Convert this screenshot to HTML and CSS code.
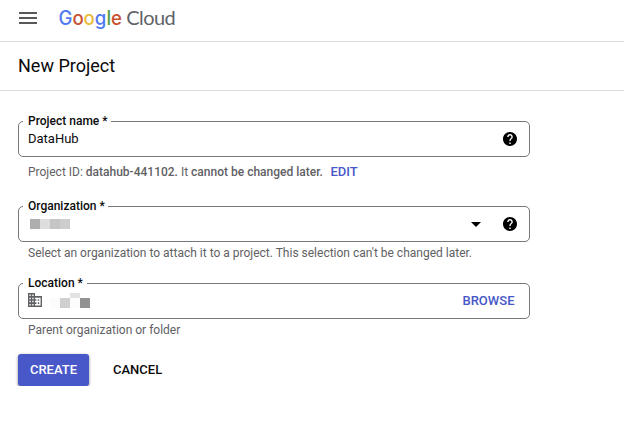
FILE: index.html
```html
<!DOCTYPE html>
<html lang="en">
<head>
<meta charset="utf-8">
<title>New Project</title>
<link rel="stylesheet" href="styles.css">
</head>
<body>
<header class="topbar">
  <svg class="menu" width="18" height="12" viewBox="0 0 18 12"><path d="M0 0h18v2H0zM0 5h18v2H0zM0 10h18v2H0z" fill="#57585a"/></svg>
  <svg class="logo" width="120" height="30" viewBox="0 0 120 30">
    <text x="-0.500" y="20.500" class="logo-text" textLength="63.500" lengthAdjust="spacingAndGlyphs"><tspan fill="#5079ef">G</tspan><tspan fill="#c9512f">o</tspan><tspan fill="#e9bb3a">o</tspan><tspan fill="#5079ef">g</tspan><tspan fill="#55a04c">l</tspan><tspan fill="#c9512f">e</tspan></text>
    <text x="67.200" y="20.500" class="logo-cloud" textLength="49.500" lengthAdjust="spacing">Cloud</text>
  </svg>
</header>
<div class="titlebar"><h1>New Project</h1></div>
<main class="form">
  <div class="field">
    <label class="label">Project name *</label>
    <span class="value">DataHub</span>
    <svg class="help" width="14" height="14" viewBox="2 2 20 20"><path d="M12 2C6.48 2 2 6.48 2 12s4.480 10 10 10 10-4.480 10-10S17.520 2 12 2zm1 17h-2v-2h2v2zm2.070-7.750l-.9.920C13.450 12.900 13 13.500 13 15h-2v-.5c0-1.100.450-2.100 1.170-2.830l1.240-1.260c.370-.360.590-.860.590-1.410 0-1.100-.9-2-2-2s-2 .9-2 2H8c0-2.210 1.790-4 4-4s4 1.790 4 4c0 .880-.360 1.680-.930 2.250z"/></svg>
  </div>
  <p class="hint hint-id"><span>Project ID: <b>datahub-441102.</b> It <b>cannot be changed later.</b></span><a class="link edit">EDIT</a></p>
  <div class="field">
    <label class="label label-org">Organization *</label>
    <span class="mosaic"><i class="m1"></i><i class="m2"></i><i class="m3"></i><i class="m4"></i></span>
    <svg class="caret" width="10" height="5" viewBox="0 0 10 5"><path d="M0 0h10L5 5z"/></svg>
    <svg class="help" width="14" height="14" viewBox="2 2 20 20"><path d="M12 2C6.48 2 2 6.48 2 12s4.480 10 10 10 10-4.480 10-10S17.520 2 12 2zm1 17h-2v-2h2v2zm2.070-7.750l-.9.920C13.450 12.900 13 13.500 13 15h-2v-.5c0-1.100.450-2.100 1.170-2.830l1.240-1.260c.370-.360.590-.860.590-1.410 0-1.100-.9-2-2-2s-2 .9-2 2H8c0-2.210 1.790-4 4-4s4 1.790 4 4c0 .880-.360 1.680-.930 2.250z"/></svg>
  </div>
  <p class="hint hint-org">Select an organization to attach it to a project. This selection can't be changed later.</p>
  <div class="field">
    <label class="label label-loc">Location *</label>
    <svg class="building" width="14" height="14" viewBox="2 3 20 18" preserveAspectRatio="none"><path fill="#5f6164" d="M12 7V3H2v18h20V7H12zM6 19H4v-2h2v2zm0-4H4v-2h2v2zm0-4H4V9h2v2zm0-4H4V5h2v2zm4 12H8v-2h2v2zm0-4H8v-2h2v2zm0-4H8V9h2v2zm0-4H8V5h2v2zm10 12h-8v-2h2v-2h-2v-2h2v-2h-2V9h8v10zm-2-8h-2v2h2v-2zm0 4h-2v2h2v-2z"/></svg>
    <svg class="redacted" width="40" height="15" viewBox="0 0 40 15"><path fill="#fcfcfc" d="M0 5h10v10H0z"/><path fill="#cfcfcf" d="M10 5h10v10H10z"/><path fill="#e2e2e2" d="M20 0h10v5H20z"/><path fill="#fcfcfc" d="M20 5h10v10H20z"/><path fill="#929292" d="M30 5h10v10H30z"/></svg>
    <a class="link browse">BROWSE</a>
  </div>
  <p class="hint hint-loc">Parent organization or folder</p>
  <div class="actions"><button class="create">CREATE</button><button class="cancel">CANCEL</button></div>
</main>
</body>
</html>
```
FILE: styles.css
```css
* { box-sizing: border-box; }
body { margin: 0; background: #fff; color: #0b0b0b; font-family: Roboto, sans-serif; font-size: 13px; }
.topbar { height: 42px; border-bottom: 1px solid #dcdcdc; display: flex; align-items: flex-start; padding-left: 19px; }
.menu { margin-top: 12px; }
.logo { margin: 4px 0 0 22px; overflow: visible; }
.logo-text { font: 500 19.5px Inter, sans-serif; }
.logo-cloud { font: 20px Lato, sans-serif; fill: #5f6368; }
.titlebar { height: 49px; border-bottom: 1px solid #dcdcdc; padding: 0 18px; display: flex; align-items: center; }
h1 { margin: 0; font-size: 18px; font-weight: 400; line-height: 24px; }
.form { padding: 30px 18px 0; width: 548px; }
.field { position: relative; height: 36px; border: 1px solid #77787b; border-radius: 5px; display: flex; align-items: center; padding: 0 12px 0 9px; }
.label { position: absolute; left: 4px; top: -8px; width: 88px; padding-left: 5px; background: #fff; font-size: 12px; font-weight: 500; line-height: 14px; white-space: nowrap; }
.label-org { width: 85px; }
.label-loc { width: 64px; }
.value { flex: 1; padding-bottom: 2px; }
.help { flex: none; }
.hint { margin: 0; padding-left: 10px; font-size: 12px; line-height: 16px; color: #5f6164; white-space: nowrap; }
.hint b { font-weight: 500; }
.hint-id { display: flex; margin: 7px 0 26px; }
.hint-org { margin: 3px 0 22px; }
.hint-loc { margin: 3px 0 16px; }
.link { color: #4757c9; font-weight: 500; font-size: 13px; }
.edit { margin-left: 7.5px; }
.browse { margin-left: auto; margin-right: 2.5px; padding-bottom: 2px; }
.building { margin-bottom: 2px; }
.mosaic { display: flex; margin-left: 2px; flex: 1; }
.mosaic i { width: 10px; height: 10px; }
.m1 { background: #aeaeae; }
.m2 { background: #dddddd; }
.m3 { background: #c5c5c5; }
.m4 { background: #cdcdcd; }
.caret { margin-right: 22px; }
.redacted { margin-left: 8px; margin-bottom: 1px; }
.actions { display: flex; }
button { font: 500 13px Roboto, sans-serif; height: 32px; border: 0; padding: 0 0 2px; }
.create { width: 71px; background: #4858c9; color: #fff; border-radius: 3px; box-shadow: 0 1px 3px rgba(0,0,0,.5); }
.cancel { margin-left: 24px; background: none; color: #0b0b0b; }
```
